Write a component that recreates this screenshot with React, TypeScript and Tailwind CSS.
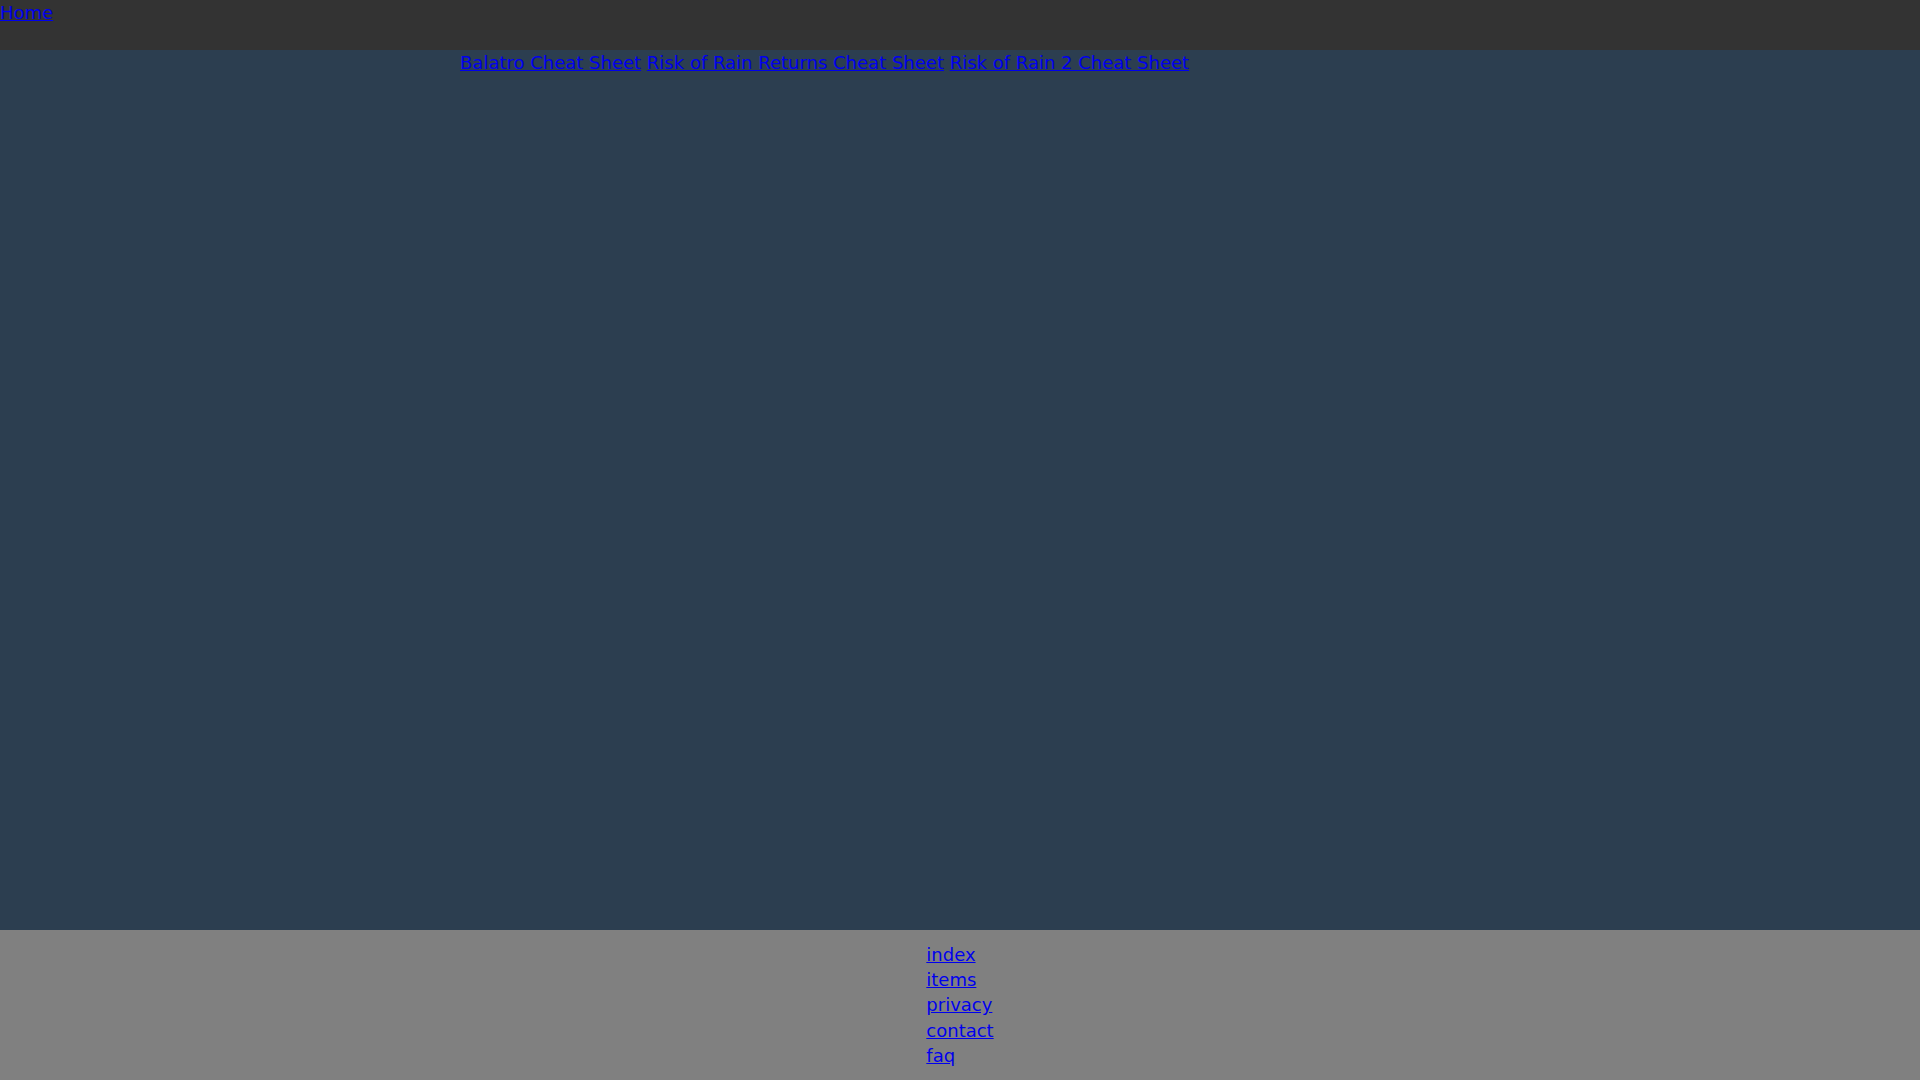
const NAV = ['Balatro Cheat Sheet', 'Risk of Rain Returns Cheat Sheet', 'Risk of Rain 2 Cheat Sheet'];
const FOOTER = ['index', 'items', 'privacy', 'contact', 'faq'];

export default function App() {
  return (
    <div className="flex min-h-screen flex-col text-[18px] leading-[1.4] font-['DejaVu_Sans',sans-serif]">
      <header className="h-[50px] bg-[#333333]">
        <a href="#" className="text-[#0000ee] underline">Home</a>
      </header>

      <main className="flex-1 bg-[#2c3e50]">
        <div className="mx-auto w-[1000px]">
          {NAV.map((n, i) => (
            <span key={n}>
              {i > 0 && ' '}
              <a href="#" className="text-[#0000ee] underline">{n}</a>
            </span>
          ))}
        </div>
      </main>

      <footer className="bg-[#808080] py-3">
        <ul className="mx-auto w-fit">
          {FOOTER.map(f => (
            <li key={f}>
              <a href="#" className="text-[#0000ee] underline">{f}</a>
            </li>
          ))}
        </ul>
      </footer>
    </div>
  );
}
